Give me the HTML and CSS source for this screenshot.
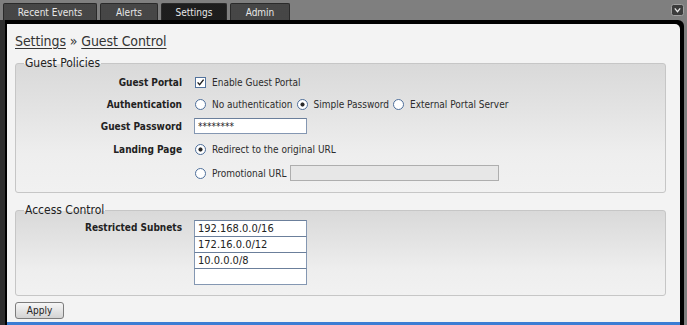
FILE: index.html
```html
<!DOCTYPE html>
<html lang="en">
<head>
<meta charset="utf-8">
<title>Settings » Guest Control</title>
<link rel="stylesheet" href="styles.css">
</head>
<body>
<div class="top">
  <nav class="tabs">
    <a class="tab tab-events">Recent Events</a>
    <a class="tab tab-alerts">Alerts</a>
    <a class="tab tab-settings active">Settings</a>
    <a class="tab tab-admin">Admin</a>
  </nav>
  <span class="menu-btn">
    <svg width="13" height="12" viewBox="0 0 13 12">
      <rect x="0.5" y="0.5" width="12" height="11" rx="2" fill="#3c3c3c" stroke="#a0a0a0"/>
      <path d="M3.8 4.3 L6.5 7.6 L9.2 4.3" fill="none" stroke="#e8e8e8" stroke-width="1.3"/>
    </svg>
  </span>
</div>
<div class="frame">
  <main class="panel">
    <h1 class="crumb"><a class="crumb-link">Settings</a> » <a class="crumb-link">Guest Control</a></h1>

    <fieldset class="group group-policies">
      <legend class="group-title">Guest Policies</legend>
      <div class="form form-policies">
        <div class="lbl">Guest Portal</div>
        <div class="ctl">
          <label class="opt"><span class="check"><svg width="11" height="11" viewBox="0 0 11 11"><path d="M2.6 5.4 L4.6 7.6 L8.6 2.6" fill="none" stroke="#1e1e1e" stroke-width="1.4"/></svg></span>Enable Guest Portal</label>
        </div>

        <div class="lbl">Authentication</div>
        <div class="ctl">
          <label class="opt"><input class="radio" type="radio" name="auth">No authentication</label>
          <label class="opt"><input class="radio" type="radio" name="auth" checked>Simple Password</label>
          <label class="opt"><input class="radio" type="radio" name="auth">External Portal Server</label>
        </div>

        <div class="lbl">Guest Password</div>
        <div class="ctl">
          <input class="field field-pass" type="text" value="********">
        </div>

        <div class="lbl">Landing Page</div>
        <div class="ctl">
          <label class="opt"><input class="radio" type="radio" name="landing" checked>Redirect to the original URL</label>
        </div>

        <div class="lbl"></div>
        <div class="ctl">
          <label class="opt"><input class="radio" type="radio" name="landing">Promotional URL</label>
          <input class="field field-promo" type="text" disabled>
        </div>
      </div>
    </fieldset>

    <fieldset class="group group-access">
      <legend class="group-title">Access Control</legend>
      <div class="form form-access">
        <div class="lbl lbl-top">Restricted Subnets</div>
        <div class="subnets">
          <input class="field field-subnet" type="text" value="192.168.0.0/16">
          <input class="field field-subnet" type="text" value="172.16.0.0/12">
          <input class="field field-subnet" type="text" value="10.0.0.0/8">
          <input class="field field-subnet" type="text" value="">
        </div>
      </div>
    </fieldset>

    <button class="apply" type="button">Apply</button>
  </main>
</div>
</body>
</html>
```

FILE: styles.css
```css
* { box-sizing: border-box; }

html, body {
  margin: 0;
  padding: 0;
}

body {
  width: 687px;
  height: 325px;
  overflow: hidden;
  background: #7f7f7f;
  font-family: "DejaVu Sans Condensed", "DejaVu Sans", sans-serif;
  font-stretch: condensed;
  font-size: 10px;
  color: #2c2c2c;
}

/* ---------- top tab bar ---------- */
.top {
  height: 20px;
  display: flex;
  align-items: flex-end;
  padding-left: 3px;
  background: #7f7f7f;
}

.tabs {
  display: flex;
  gap: 3px;
  height: 17px;
}

.tab {
  display: flex;
  align-items: center;
  justify-content: center;
  height: 17px;
  color: #e8e8e8;
  font-size: 10px;
  background-color: #3a3a3a;
  background-image: radial-gradient(circle, #555 0.6px, transparent 0.8px);
  background-size: 2px 2px;
  border: 1px solid #2a2a2a;
  border-bottom: 0;
  border-radius: 2px 2px 0 0;
}

.tab.active {
  background-color: #121212;
  background-image: radial-gradient(circle, #2a2a2a 0.6px, transparent 0.8px);
}

.tab-events { width: 94px; }
.tab-alerts { width: 58px; }
.tab-settings { width: 66px; }
.tab-admin { width: 60px; }

.menu-btn {
  margin-left: auto;
  margin-right: 3px;
  align-self: flex-start;
  margin-top: 4px;
  height: 12px;
  display: flex;
}

/* ---------- frame / panel ---------- */
.frame {
  margin-right: 3px;
  background: #000;
  border-left: 5px solid #2e2e2e;
  padding: 4px 4px 0 2px;
  border-top-right-radius: 6px;
}

.panel {
  height: 301px;
  background: #f3f3f3;
  border-top-right-radius: 5px;
  border-bottom: 3px solid #3b7dd4;
  padding: 8px 14px 0 8px;
}

.crumb {
  margin: 0;
  font-size: 14px;
  line-height: 18px;
  font-weight: normal;
  color: #333;
  letter-spacing: -0.1px;
}

.crumb-link {
  color: #333;
  text-decoration: underline;
  text-underline-offset: 2px;
}

/* ---------- fieldsets ---------- */
.group {
  margin: 6px 0 0 0;
  padding: 1px 0 8px 0;
  border: 1px solid #c6c6c6;
  border-radius: 3px;
  background: linear-gradient(#d9d9d9 0%, #e3e3e3 35%, #eeeeee 70%, #f1f1f1 100%);
  min-width: 0;
}

.group-title {
  margin-left: 8px;
  padding: 0 1px;
  font-size: 12px;
  line-height: 14px;
  color: #222;
}

.group-access {
  margin-top: 10px;
  padding: 3px 0 10px 0;
}

.form {
  display: grid;
  grid-template-columns: 166px auto;
  column-gap: 12px;
  align-items: center;
}

.form-policies {
  grid-template-rows: 22px 22px 22px 25px 22px;
}

.form-access {
  align-items: start;
}

.lbl {
  text-align: right;
  font-weight: bold;
  color: #222;
  font-size: 10px;
}

.lbl-top {
  padding-top: 2px;
}

.ctl {
  display: flex;
  align-items: center;
}

.opt {
  display: flex;
  align-items: center;
  color: #2c2c2c;
  white-space: nowrap;
}

.opt + .opt {
  margin-left: 3px;
}

/* custom radio / checkbox */
.radio {
  appearance: none;
  -webkit-appearance: none;
  width: 11px;
  height: 11px;
  margin: 0 6px 0 1px;
  border: 1px solid #4e6f9b;
  border-radius: 50%;
  background: #fff;
  flex: none;
}

.radio:checked {
  background: radial-gradient(circle, #2a2a2a 0 1.7px, #fff 2.4px);
}

.check {
  width: 11px;
  height: 11px;
  margin: 0 6px 0 1px;
  border: 1px solid #52729c;
  background: #fff;
  display: flex;
  flex: none;
}

.check svg {
  margin: -1px;
}

/* text fields */
.field {
  height: 16px;
  border: 1px solid #8497b2;
  border-top-color: #6b7f9b;
  background: #fff;
  font-family: inherit;
  font-stretch: condensed;
  font-size: 10px;
  color: #222;
  padding: 0 3px;
  margin: 0;
  outline: none;
}

.field-pass {
  width: 113px;
}

.field-promo {
  width: 209px;
  margin-left: 4px;
  background: #e7e7e7;
  border-color: #aeaeae;
}

.subnets {
  display: flex;
  flex-direction: column;
}

.field-subnet {
  width: 113px;
  height: 17px;
  font-size: 11px;
}

.field-subnet + .field-subnet {
  margin-top: -1px;
}

/* apply button */
.apply {
  margin-top: 6px;
  width: 49px;
  height: 17px;
  padding: 0;
  border: 1px solid #7c7c7c;
  border-radius: 3px;
  background: linear-gradient(#f6f6f6, #d3d3d3);
  font-family: inherit;
  font-stretch: condensed;
  font-size: 10px;
  color: #222;
}
```
